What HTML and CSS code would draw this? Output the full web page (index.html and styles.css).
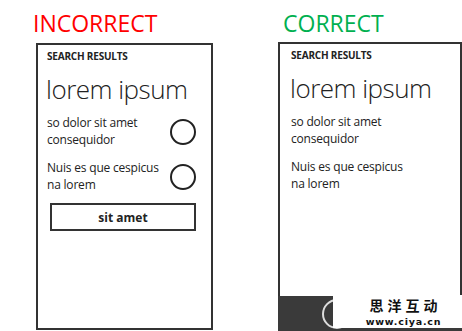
FILE: index.html
```html
<!DOCTYPE html>
<html>
<head>
<meta charset="utf-8">
<link rel="stylesheet" href="styles.css">
</head>
<body>
<div class="page">
  <div class="col col-left">
    <div class="label bad">INCORRECT</div>
    <div class="phone phone-left">
      <div class="app-title">SEARCH RESULTS</div>
      <div class="page-title">lorem ipsum</div>
      <div class="item">
        <div class="item-text">so dolor sit amet<br>consequidor</div>
        <div class="radio"></div>
      </div>
      <div class="item">
        <div class="item-text">Nuis es que cespicus<br>na lorem</div>
        <div class="radio"></div>
      </div>
      <div class="btn">sit amet</div>
    </div>
  </div>
  <div class="col col-right">
    <div class="label good">CORRECT</div>
    <div class="phone phone-right">
      <div class="content">
        <div class="app-title">SEARCH RESULTS</div>
        <div class="page-title">lorem ipsum</div>
        <div class="item"><div class="item-text">so dolor sit amet<br>consequidor</div></div>
        <div class="item"><div class="item-text">Nuis es que cespicus<br>na lorem</div></div>
      </div>
      <div class="appbar">
        <div class="appbar-circle"></div>
      </div>
      <div class="watermark">
        <div class="wm-cn">思洋互动</div>
        <div class="wm-url">www.ciya.cn</div>
      </div>
    </div>
  </div>
</div>
</body>
</html>
```
FILE: styles.css
```css
html, body {
  margin: 0;
  padding: 0;
  background: #fff;
  width: 462px;
  height: 331px;
  overflow: hidden;
}
.page {
  display: flex;
  font-family: "Open Sans", "Noto Sans", sans-serif;
  color: #222;
}
.col {
  display: flex;
  flex-direction: column;
}
.col-left {
  margin-left: 36px;
  width: 177px;
}
.col-right {
  margin-left: 65px;
  width: 184px;
}
.label {
  font-size: 23px;
  line-height: 26px;
  margin-top: 10px;
  height: 33px;
  margin-left: -3px;
  font-weight: 400;
}
.col-right .label { height: 32px; margin-left: 5px; }
.bad { color: #ff0000; }
.good { color: #00b050; }
.phone {
  border: 2px solid #333;
  box-sizing: border-box;
  position: relative;
}
.phone-left {
  height: 287px;
  padding: 4px 0 0 9px;
}
.phone-right {
  height: 289px;
  display: flex;
  flex-direction: column;
  border-bottom: none;
}
.content {
  padding: 4px 0 0 11px;
  flex: 1;
}
.app-title {
  font-size: 10px;
  font-weight: 700;
  line-height: 14px;
  letter-spacing: -0.2px;
}
.page-title {
  font-size: 26px;
  font-weight: 300;
  line-height: 36px;
  margin-top: 8px;
  letter-spacing: -0.5px;
  margin-left: -1px;
}
.item {
  display: flex;
  align-items: center;
  margin-top: 8px;
}
.item + .item { margin-top: 12px; }
.item-text {
  font-size: 12px;
  line-height: 16.5px;
  width: 122px;
  letter-spacing: -0.2px;
}
.radio {
  width: 22px;
  height: 22px;
  border: 2px solid #222;
  border-radius: 50%;
  margin-left: 1px;
}
.btn {
  width: 146px;
  height: 28px;
  box-sizing: border-box;
  border: 2px solid #333;
  margin: 10px 0 0 3px;
  font-size: 12px;
  font-weight: 700;
  display: flex;
  align-items: center;
  justify-content: center;
}
.appbar {
  height: 35px;
  background: #3a3a3a;
  margin: 0 -2px;
  position: relative;
  overflow: hidden;
}
.appbar-circle {
  position: absolute;
  left: 44px;
  top: 3px;
  width: 26px;
  height: 26px;
  border: 2px solid #ddd;
  border-radius: 50%;
}
.watermark {
  position: absolute;
  left: 53px;
  bottom: 3px;
  width: 131px;
  height: 33px;
  background: #fff;
  display: flex;
  flex-direction: column;
  align-items: center;
  padding-left: 10px;
  box-sizing: border-box;
}
.wm-cn {
  font-family: "Noto Sans CJK SC", sans-serif;
  font-size: 14px;
  line-height: 20.5px;
  font-weight: 700;
  color: #111;
  letter-spacing: 4px;
  margin-right: -4px;
}
.wm-url {
  font-family: "DejaVu Sans", sans-serif;
  font-size: 9.5px;
  line-height: 12px;
  font-weight: 700;
  color: #111;
  letter-spacing: 0.8px;
}
```
